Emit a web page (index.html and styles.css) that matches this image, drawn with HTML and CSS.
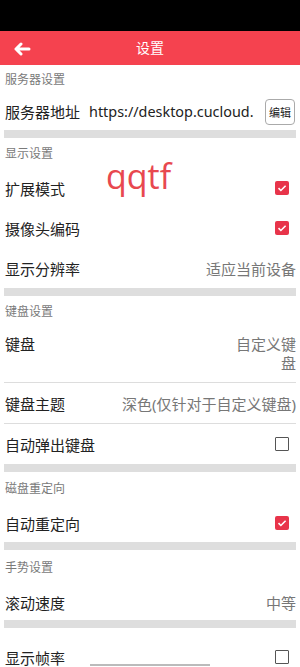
FILE: index.html
```html
<!DOCTYPE html>
<html lang="zh">
<head>
<meta charset="utf-8">
<link rel="stylesheet" href="styles.css">
</head>
<body>
<div class="status"></div>
<header class="topbar">
  <svg class="back" width="18" height="14" viewBox="0 0 18 14"><path d="M16 7H3M8 2L3 7l5 5" fill="none" stroke="#fff" stroke-width="3" stroke-linecap="round" stroke-linejoin="round"/></svg>
  <span class="title">设置</span>
</header>
<main class="list">
  <div class="label l1">服务器设置</div>
  <div class="row r-server">
    <span class="name">服务器地址</span>
    <span class="url">https://desktop.cucloud.</span>
    <span class="btn">编辑</span>
  </div>
  <div class="bar"></div>

  <div class="label">显示设置</div>
  <div class="row"><span class="name">扩展模式</span><span class="cb on"><svg viewBox="0 0 14 14"><path d="M3.5 7.2l2.4 2.3L10.6 4.8" fill="none" stroke="#fff" stroke-width="1.6"/></svg></span></div>
  <div class="row"><span class="name">摄像头编码</span><span class="cb on"><svg viewBox="0 0 14 14"><path d="M3.5 7.2l2.4 2.3L10.6 4.8" fill="none" stroke="#fff" stroke-width="1.6"/></svg></span></div>
  <div class="row"><span class="name">显示分辨率</span><span class="val">适应当前设备</span></div>
  <div class="bar"></div>

  <div class="label">键盘设置</div>
  <div class="row tall"><span class="name">键盘</span><span class="val narrow">自定义键盘</span></div>
  <div class="row line"><span class="name">键盘主题</span><span class="val">深色(仅针对于自定义键盘)</span></div>
  <div class="row line"><span class="name">自动弹出键盘</span><span class="cb"></span></div>
  <div class="bar"></div>

  <div class="label l4">磁盘重定向</div>
  <div class="row r4"><span class="name">自动重定向</span><span class="cb on"><svg viewBox="0 0 14 14"><path d="M3.5 7.2l2.4 2.3L10.6 4.8" fill="none" stroke="#fff" stroke-width="1.6"/></svg></span></div>
  <div class="bar"></div>

  <div class="label l5">手势设置</div>
  <div class="row r5"><span class="name">滚动速度</span><span class="val">中等</span></div>
  <div class="bar"></div>

  <div class="row last"><span class="name">显示帧率</span><span class="cb"></span></div>
</main>
<div class="watermark">qqtf</div>
<div class="home"></div>
</body>
</html>
```
FILE: styles.css
```css
html, body {
  margin: 0;
  padding: 0;
  width: 300px;
  height: 667px;
  overflow: hidden;
  background: #fff;
  font-family: "Noto Sans", "Noto Sans CJK SC", sans-serif;
  color: #222;
}
.status {
  height: 31px;
  background: #000;
}
.topbar {
  height: 34px;
  background: #f5424f;
  display: flex;
  align-items: center;
  justify-content: center;
  position: relative;
}
.back {
  position: absolute;
  left: 13px;
  top: 11px;
}
.title {
  color: #fff;
  font-size: 14px;
  line-height: 20px;
}
.list {
  margin: 0 4px;
}
.label {
  height: 30px;
  display: flex;
  align-items: center;
  padding-left: 1px;
  font-size: 12px;
  color: #7a7a7a;
}
.l1 { height: 28px; }
.l4 { height: 32px; }
.l5 { height: 34px; }
.row {
  height: 40px;
  display: flex;
  align-items: center;
  padding-left: 1px;
  font-size: 15px;
}
.name {
  flex: 1;
  white-space: nowrap;
}
.r-server { height: 37px; }
.r-server .name { flex: 0 0 auto; }
.url {
  flex: 1;
  min-width: 0;
  margin-left: 9px;
  white-space: nowrap;
  font-size: 14.4px;
  color: #222;
}
.btn {
  flex: 0 0 auto;
  width: 28px;
  height: 24px;
  border: 1px solid #aaa;
  border-radius: 4px;
  font-size: 11px;
  display: flex;
  align-items: center;
  justify-content: center;
  margin-left: 4px;
  margin-right: 1px;
}
.val {
  color: #777;
  text-align: right;
  white-space: nowrap;
}
.narrow {
  white-space: normal;
  width: 60px;
  line-height: 19px;
}
.tall {
  height: 56px;
  align-items: flex-start;
  padding-top: 9px;
  box-sizing: border-box;
  line-height: 19px;
}
.line {
  border-top: 1px solid #ddd;
}
.r4 { height: 38px; }
.r5 { height: 36px; }
.last { margin-top: 9px; }
.cb {
  width: 14px;
  height: 14px;
  box-sizing: border-box;
  border: 1.5px solid #555;
  border-radius: 1px;
  margin-right: 7px;
  flex: 0 0 auto;
}
.cb.on {
  border: none;
  background: #e8344a;
  border-radius: 2px;
}
.cb svg {
  display: block;
  width: 14px;
  height: 14px;
}
.bar {
  height: 8px;
  background: #dedede;
}
.watermark {
  position: absolute;
  left: 106px;
  top: 156px;
  font-family: "Open Sans", sans-serif;
  font-size: 34px;
  line-height: 40px;
  color: #e8484f;
}
.home {
  position: absolute;
  left: 90px;
  top: 664px;
  width: 120px;
  height: 2px;
  background: #bbb;
}
```
